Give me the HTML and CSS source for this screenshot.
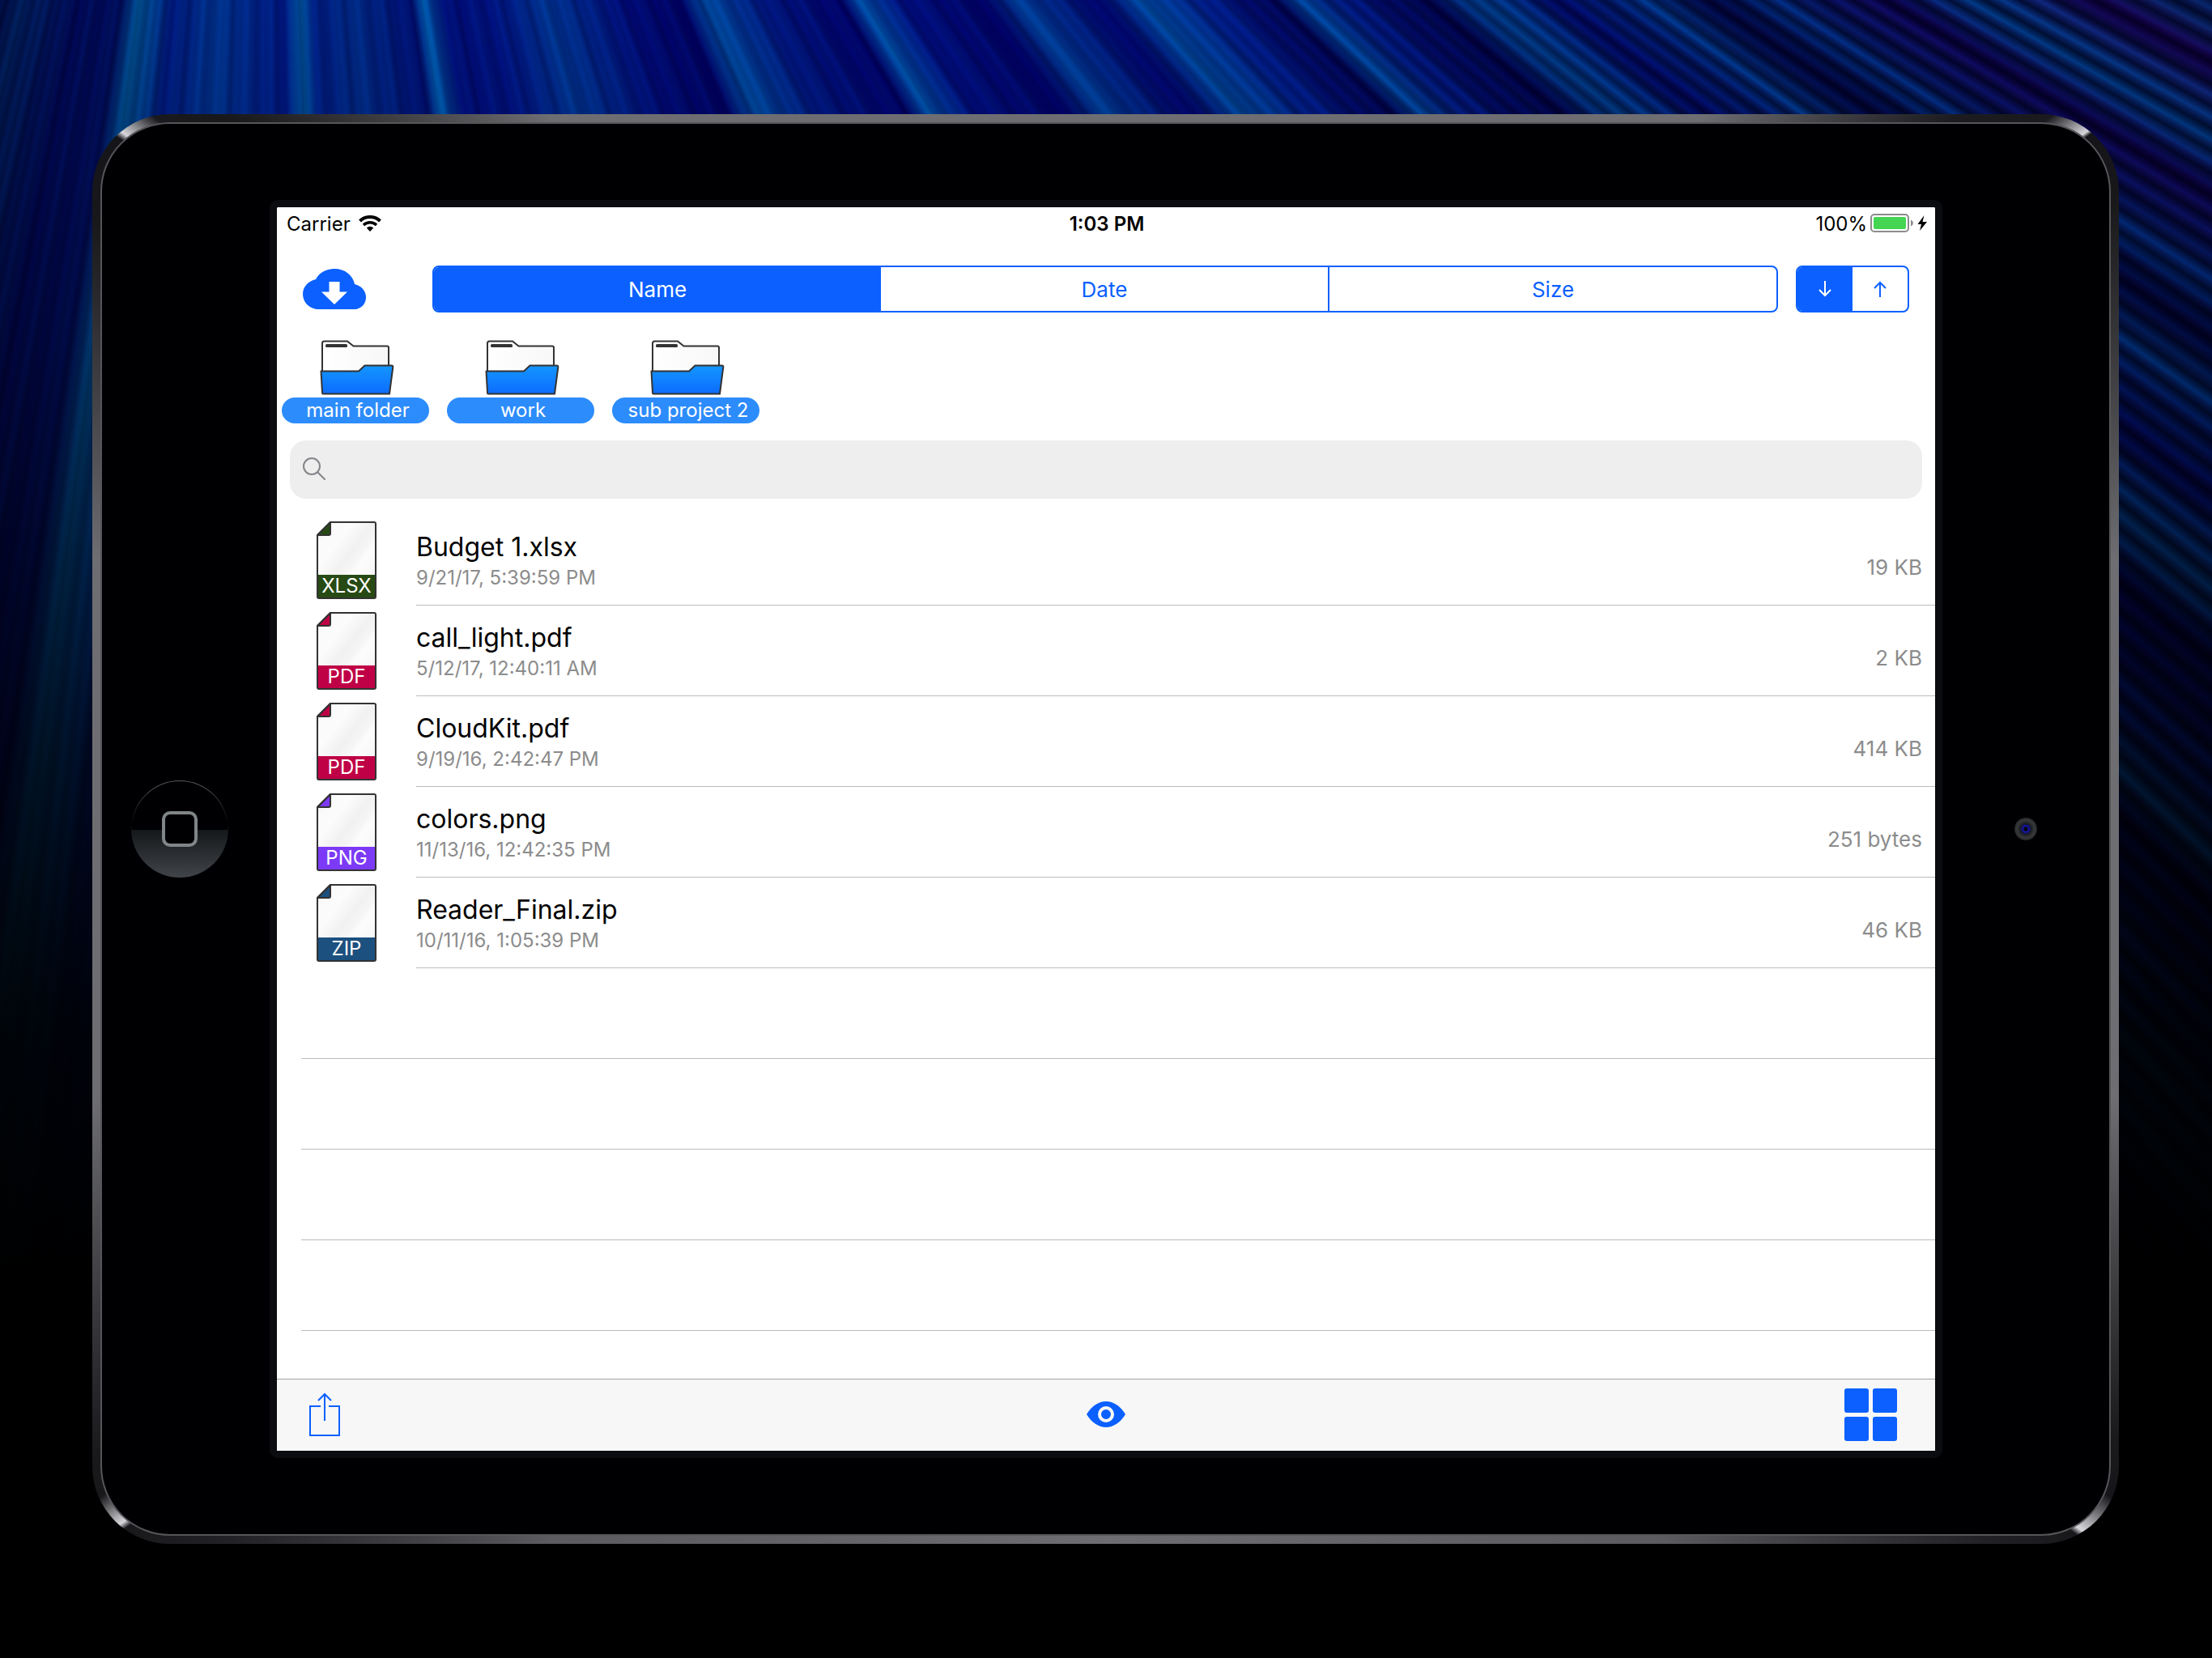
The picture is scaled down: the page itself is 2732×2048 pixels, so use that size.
FILE: index.html
```
<!DOCTYPE html>
<html lang="en">
	<head>
		<meta charset="utf-8">
		<title>Files</title>
		<link rel="stylesheet" href="styles.css">
	</head>
	<body>

		<!-- shared drawings -->
		<svg class="Defs" aria-hidden="true">
			<defs>
				<linearGradient id="paper" x1="0" y1="0" x2="1" y2="1">
					<stop offset="0" stop-color="#e6e6e6"/>
					<stop offset="0.15" stop-color="#fafafa"/>
					<stop offset="0.3" stop-color="#fcfcfc"/>
					<stop offset="0.48" stop-color="#f1f1f1"/>
					<stop offset="0.58" stop-color="#f5f5f5"/>
					<stop offset="0.64" stop-color="#fcfcfc"/>
					<stop offset="1" stop-color="#f2f2f2"/>
				</linearGradient>
				<linearGradient id="folderFront" x1="0" y1="0" x2="0" y2="1">
					<stop offset="0" stop-color="#1496ff"/>
					<stop offset="1" stop-color="#0c6cff"/>
				</linearGradient>
				<linearGradient id="folderBack" x1="0" y1="0" x2="1" y2="0">
					<stop offset="0" stop-color="#ffffff"/>
					<stop offset="1" stop-color="#f7f7f8"/>
				</linearGradient>
			</defs>
			<symbol id="folder" viewBox="0 0 92 68">
				<path d="M3 40V4Q3 1.5 5.5 1.5H34L41.5 7.5H83Q85 7.5 85 9.5V40Z" fill="url(#folderBack)" stroke="#333" stroke-width="2"/>
				<rect x="7" y="5" width="27" height="4" rx="1.5" fill="#333"/>
				<path d="M1.5 38.5H48L55.5 31.5H88.5Q90.5 31.5 90.3 33.5L86 66.5H4Q3 66.5 3 65Z" fill="url(#folderFront)" stroke="#333" stroke-width="2" stroke-linejoin="round"/>
			</symbol>
			<symbol id="file" viewBox="0 0 74 96">
				<path d="M17 1H71Q73 1 73 3V93Q73 95 71 95H3Q1 95 1 93V17Z" fill="url(#paper)"/>
				<path d="M2 66H72V94H2Z" fill="currentColor"/>
				<path d="M17 1V15Q17 17 15 17H1Z" fill="currentColor" stroke="#333" stroke-width="2" stroke-linejoin="round"/>
				<path d="M17 1H71Q73 1 73 3V93Q73 95 71 95H3Q1 95 1 93V17Z" fill="none" stroke="#333" stroke-width="2" stroke-linejoin="round"/>
			</symbol>
		</svg>

		<div class="Device">
			<div class="Face">
				<div class="Side HomeSide">
					<button class="Home" aria-label="Home"><span class="HomeMark"></span></button>
				</div>

				<main class="Screen">
					<div class="StatusBar">
						<div class="StatusLeft">
							Carrier
							<svg width="28" height="20" viewBox="0 0 28 20">
								<path d="M1.5 7A18 18 0 0 1 26.5 7" fill="none" stroke="#000" stroke-width="4"/>
								<path d="M6 12A11.5 11.5 0 0 1 22 12" fill="none" stroke="#000" stroke-width="3.5"/>
								<path d="M14 20L9.8 15.5A6 6 0 0 1 18.2 15.5Z"/>
							</svg>
						</div>
						<div class="Clock">1:03 PM</div>
						<div class="StatusRight">
							100%
							<svg width="70" height="24" viewBox="0 0 70 24">
								<rect x="1" y="1" width="46" height="21" rx="4" fill="none" stroke="#8c8c8c" stroke-width="2"/>
								<rect x="4" y="4" width="40" height="15" rx="2" fill="#44d553"/>
								<path d="M50 7.5Q53 9 53 11.5T50 15.5Z" fill="#8c8c8c"/>
								<path d="M66.5 2L58.5 13H63L61 21L70 10H64.5Z"/>
							</svg>
						</div>
					</div>

					<div class="SortBar">
						<button class="Icon Cloud" aria-label="Download from cloud">
							<svg width="78" height="50" viewBox="0 0 78 50">
								<path d="M17 50C6 48 0 40 0 31C0 22 7 15 16 13C20 5 29 0 39 0C52 0 62 8 64 19C72 21 78 27 78 35C78 42 74 48 66 50Z" fill="#0b60ff"/>
								<path d="M32.5 16H45.5V28.5H55L39 44L23 28.5H32.5Z" fill="#fff"/>
							</svg>
						</button>
						<div class="Segments SortBy">
							<button class="Segment Active" aria-pressed="true">Name</button>
							<button class="Segment" aria-pressed="false">Date</button>
							<button class="Segment" aria-pressed="false">Size</button>
						</div>
						<div class="Segments Direction">
							<button class="Segment Active" aria-pressed="true" aria-label="Descending">
								<svg width="16" height="20" viewBox="0 0 16 20"><path d="M8 0V18M1 11L8 18L15 11"/></svg>
							</button>
							<button class="Segment" aria-pressed="false" aria-label="Ascending">
								<svg width="16" height="20" viewBox="0 0 16 20"><path d="M8 20V2M1 9L8 2L15 9"/></svg>
							</button>
						</div>
					</div>

					<nav class="Folders">
						<a class="Folder" href="#main-folder">
							<svg width="92" height="68"><use href="#folder"/></svg>
							<span class="FolderName">main folder</span>
						</a>
						<a class="Folder" href="#work">
							<svg width="92" height="68"><use href="#folder"/></svg>
							<span class="FolderName">work</span>
						</a>
						<a class="Folder" href="#sub-project-2">
							<svg width="92" height="68"><use href="#folder"/></svg>
							<span class="FolderName">sub project 2</span>
						</a>
					</nav>

					<label class="Search">
						<svg width="28" height="28" viewBox="0 0 28 28"><path d="M18 18L27 27M21 11A10 10 0 1 1 1 11A10 10 0 1 1 21 11Z" fill="none" stroke="#85858a" stroke-width="2" stroke-linecap="round"/></svg>
						<input type="search" aria-label="Search">
					</label>

					<ul class="Files">
						<li class="File">
							<div class="FileIcon Xlsx"><svg width="74" height="96"><use href="#file"/></svg><span class="Ext">XLSX</span></div>
							<div class="FileRow">
								<div class="FileText"><a class="FileName" href="#budget">Budget 1.xlsx</a><span class="FileDate">9/21/17, 5:39:59 PM</span></div>
								<span class="FileSize">19 KB</span>
							</div>
						</li>
						<li class="File">
							<div class="FileIcon Pdf"><svg width="74" height="96"><use href="#file"/></svg><span class="Ext">PDF</span></div>
							<div class="FileRow">
								<div class="FileText"><a class="FileName" href="#call-light">call_light.pdf</a><span class="FileDate">5/12/17, 12:40:11 AM</span></div>
								<span class="FileSize">2 KB</span>
							</div>
						</li>
						<li class="File">
							<div class="FileIcon Pdf"><svg width="74" height="96"><use href="#file"/></svg><span class="Ext">PDF</span></div>
							<div class="FileRow">
								<div class="FileText"><a class="FileName" href="#cloudkit">CloudKit.pdf</a><span class="FileDate">9/19/16, 2:42:47 PM</span></div>
								<span class="FileSize">414 KB</span>
							</div>
						</li>
						<li class="File">
							<div class="FileIcon Png"><svg width="74" height="96"><use href="#file"/></svg><span class="Ext">PNG</span></div>
							<div class="FileRow">
								<div class="FileText"><a class="FileName" href="#colors">colors.png</a><span class="FileDate">11/13/16, 12:42:35 PM</span></div>
								<span class="FileSize">251 bytes</span>
							</div>
						</li>
						<li class="File">
							<div class="FileIcon Zip"><svg width="74" height="96"><use href="#file"/></svg><span class="Ext">ZIP</span></div>
							<div class="FileRow">
								<div class="FileText"><a class="FileName" href="#reader">Reader_Final.zip</a><span class="FileDate">10/11/16, 1:05:39 PM</span></div>
								<span class="FileSize">46 KB</span>
							</div>
						</li>
						<li class="Empty"></li>
						<li class="Empty"></li>
						<li class="Empty"></li>
						<li class="Empty"></li>
					</ul>

					<footer class="ToolBar">
						<button class="Icon" aria-label="Share">
							<svg width="38" height="54" viewBox="0 0 38 54"><path d="M14 17H1V53H37V17H24M19 2V35M11 10L19 2L27 10" fill="none" stroke="#0b60ff" stroke-width="2"/></svg>
						</button>
						<button class="Icon" aria-label="Preview">
							<svg width="48" height="32" viewBox="0 0 48 32">
								<path d="M0 16C6 6 15 0 24 0S42 6 48 16C42 26 33 32 24 32S6 26 0 16Z" fill="#0b60ff"/>
								<circle cx="24" cy="16" r="8" fill="#0b60ff" stroke="#f7f7f7" stroke-width="4"/>
							</svg>
						</button>
						<button class="Icon" aria-label="Grid view">
							<svg width="65" height="65" viewBox="0 0 65 65" fill="#0b60ff">
								<rect width="30" height="30" rx="3"/>
								<rect x="35" width="30" height="30" rx="3"/>
								<rect y="35" width="30" height="30" rx="3"/>
								<rect x="35" y="35" width="30" height="30" rx="3"/>
							</svg>
						</button>
					</footer>
				</main>

				<div class="Side">
					<div class="Camera"></div>
				</div>
			</div>
		</div>
	</body>
</html>
```
FILE: styles.css
```
* { box-sizing: border-box; }

html, body { margin: 0; min-height: 100%; }
html { background: #000; }

body {
	display: flex;
	min-height: 100vh;
	padding: 141px 115px 141px 114px;
	font-family: Inter, "Liberation Sans", sans-serif;
	font-size: 24px;
	color: #000;
	position: relative;
	z-index: 0;
	/* broad light streaks */
	background:
		linear-gradient(to right, rgba(0,0,20,0.35) 0, rgba(0,0,0,0) 8%, rgba(0,0,10,0) 60%, rgba(0,0,15,0.1) 100%),
		repeating-conic-gradient(from 0deg at 330px -1200px, rgba(0,0,60,0.3) 0deg, rgba(0,70,170,0.1) 0.4deg, rgba(0,0,90,0.1) 0.9deg, rgba(0,0,60,0.3) 1.3deg),
		conic-gradient(from 0deg at 330px -1200px,
			#000030 110deg,
			#0a3a80 114deg, #100050 115deg,
			#0a3c88 117deg, #200060 118deg,
			#0058b0 119.6deg, #140060 121deg,
			#003a98 123deg, #000040 124deg,
			#0044a0 125deg, #000a78 127deg,
			#0058b0 128.7deg, #000050 130deg,
			#00188c 132deg, #0052b0 133.3deg, #000058 134deg,
			#00209a 136deg, #0058b4 138deg, #000070 139.5deg,
			#0048a8 142.4deg, #00006a 143.5deg,
			#00108a 147deg, #005cb8 148.6deg, #000070 149.5deg,
			#001888 153deg, #0056b0 155.8deg, #000068 157deg,
			#000c80 160deg, #003c9e 164deg, #00148a 167deg,
			#000e80 169.7deg, #0064b8 170.9deg, #00107a 171.6deg,
			#003090 175deg, #00208c 177.3deg, #0068b4 178deg, #001a8a 179deg,
			#003a98 183deg, #001c88 185.5deg, #006ab0 187.4deg, #00106e 188.6deg,
			#000c70 191deg, #003488 194deg, #000a58 196deg,
			#000840 205deg);
}

/* thin fibres, clearest towards the right */
body::before, body::after {
	content: "";
	position: absolute;
	inset: 0;
	z-index: -1;
}
body::before {
	background:
		repeating-conic-gradient(from 0deg at 330px -1200px, rgba(0,0,24,0.75) 0deg, rgba(0,0,24,0) 0.25deg, rgba(10,0,40,0.4) 0.35deg, rgba(0,0,24,0.75) 0.5deg);
	-webkit-mask-image: linear-gradient(to right, rgba(0,0,0,0.4) 0, rgba(0,0,0,0.15) 10%, rgba(0,0,0,0.2) 50%, #000 85%);
	mask-image: linear-gradient(to right, rgba(0,0,0,0.4) 0, rgba(0,0,0,0.15) 10%, rgba(0,0,0,0.2) 50%, #000 85%);
}
/* fade to black down the page */
body::after {
	background: linear-gradient(to bottom, rgba(0,0,0,0) 0, rgba(0,0,0,0.2) 20%, rgba(0,0,0,0.65) 45%, rgba(0,0,0,0.9) 62%, #000 78%);
}

.Defs { position: absolute; width: 0; height: 0; }

button {
	font: inherit;
	margin: 0;
	padding: 0;
	border: 0;
	background: none;
}
a { color: inherit; text-decoration: none; }
svg { display: block; flex: none; }

/* tablet body, the polished edge */
.Device {
	flex: 1;
	display: flex;
	padding: 10px;
	border-radius: 96px;
	background: conic-gradient(
		#6e6e72 0deg, #6e6e72 40deg, #1c1c20 50deg, #1a1a1e 53deg, #d8d8dc 54.6deg, #151519 54.8deg,
		#18181b 58deg, #6e6e72 75deg, #6e6e72 105deg, #1a1a1d 121deg, #16161a 123.6deg, #d8d8dc 125.7deg, #18181b 126deg,
		#222226 129deg, #5c5c60 142deg, #6e6e72 180deg, #5c5c60 218deg, #222226 231deg, #18181b 234.5deg, #d8d8dc 234.8deg, #18181b 236.4deg,
		#18181b 238deg, #6e6e72 255deg, #6e6e72 285deg, #18181b 301deg, #151519 305deg, #d8d8dc 305.3deg, #1a1a1e 306.8deg,
		#18181b 309deg, #6e6e72 322deg, #6e6e72 360deg);
}
.Face {
	flex: 1;
	display: grid;
	grid-template-columns: 207px minmax(0, 1fr) 206px;
	padding: 94px 0;
	border: 2px solid #55555a;
	border-radius: 86px;
	background: #000003;
}
.Side {
	display: flex;
	align-items: center;
	justify-content: center;
}
.HomeSide { padding-right: 16px; }
.Home {
	display: flex;
	align-items: center;
	justify-content: center;
	width: 120px;
	height: 120px;
	border: 1px solid transparent;
	border-radius: 50%;
	background:
		linear-gradient(to bottom, #000003 51%, #14181a 51%, #404348 100%) padding-box,
		linear-gradient(to bottom, #5a5a5c 0, #000003 45%, #14181a 52%, #404348 100%) border-box;
}
.HomeMark {
	width: 44px;
	height: 44px;
	border: 4px solid #808588;
	border-radius: 10px;
	background: #000003;
}
.Camera {
	width: 28px;
	height: 28px;
	border-radius: 50%;
	background: radial-gradient(circle, #06060c 0 2px, #1a18c8 4px, #10105a 5px, #1c2022 7px, #38393b 11px, #242527 14px);
}

.Screen {
	display: flex;
	flex-direction: column;
	min-width: 0;
	border: 9px solid #0b0c10;
	border-radius: 10px;
	background: #fff;
	background-clip: padding-box;
}

.StatusBar {
	display: grid;
	grid-template-columns: 1fr auto 1fr;
	align-items: center;
	height: 40px;
	padding: 0 10px 0 12px;
}
.StatusLeft, .StatusRight {
	display: flex;
	align-items: center;
	gap: 10px;
}
.StatusRight { justify-content: flex-end; gap: 4px; }
.Clock { font-weight: 600; }

.SortBar {
	display: flex;
	align-items: center;
	padding: 32px 32px 0;
	font-size: 26px;
}
.Cloud { margin-right: 82px; }
.Segments {
	display: flex;
	height: 58px;
	border: 2px solid #0b60ff;
	border-radius: 8px;
	overflow: hidden;
}
.SortBy { flex: 1; }
.Direction { width: 140px; margin-left: 22px; }
.Segment {
	flex: 1 1 0;
	display: flex;
	align-items: center;
	justify-content: center;
	color: #0b60ff;
}
.Segment + .Segment { border-left: 2px solid #0b60ff; }
.Segment.Active { background: #0b60ff; color: #fff; }
.Segment.Active + .Segment { border-left: 0; }
.Segment path { fill: none; stroke: currentColor; stroke-width: 2; }

.Folders {
	display: flex;
	gap: 22px;
	padding: 34px 6px 0;
}
.Folder {
	display: flex;
	flex-direction: column;
	align-items: center;
	gap: 3px;
	width: 182px;
}
.Folder svg { margin-left: 4px; }
.FolderName {
	width: 100%;
	padding-left: 6px;
	border-radius: 16px;
	background: #2d8cfb;
	color: #fff;
	font-size: 24px;
	line-height: 32px;
	text-align: center;
	white-space: nowrap;
}

.Search {
	display: flex;
	align-items: center;
	gap: 12px;
	height: 72px;
	margin: 21px 16px 20px;
	padding: 0 16px 2px;
	border-radius: 20px;
	background: #eee;
}
.Search input {
	flex: 1;
	border: 0;
	outline: 0;
	background: none;
	font: inherit;
}

.Files {
	flex: 1;
	margin: 0;
	padding: 0;
	list-style: none;
}
.File {
	display: flex;
	height: 112px;
	padding-left: 49px;
}
.FileIcon {
	display: grid;
	align-content: center;
	width: 74px;
	margin-right: 49px;
}
.FileIcon svg, .Ext { grid-area: 1 / 1; }
.Ext {
	align-self: end;
	color: #fff;
	font-size: 24px;
	line-height: 32px;
	text-align: center;
}
.Xlsx { color: #274a14; }
.Pdf { color: #bf0046; }
.Png { color: #7c3af6; }
.Zip { color: #1c507f; }

.FileRow {
	flex: 1;
	display: flex;
	justify-content: space-between;
	align-items: center;
	padding-right: 16px;
	border-bottom: 1px solid #bcbcbc;
}
.FileText {
	display: flex;
	flex-direction: column;
}
.FileName {
	font-size: 32px;
	line-height: 44px;
}
.FileDate {
	color: #8c8c8c;
	font-size: 24px;
	line-height: 32px;
}
.FileSize {
	padding-top: 18px;
	color: #8c8c8c;
	font-size: 26px;
}
.Empty {
	height: 112px;
	margin-left: 30px;
	border-bottom: 1px solid #bcbcbc;
}

.ToolBar {
	display: grid;
	grid-template-columns: 1fr auto 1fr;
	align-items: center;
	height: 89px;
	padding: 0 40px 2px;
	border-top: 1px solid #a2a2a2;
	background: #f7f7f7;
}
.ToolBar .Icon:first-child { justify-self: start; }
.ToolBar .Icon:last-child { justify-self: end; margin-right: 7px; }
```
